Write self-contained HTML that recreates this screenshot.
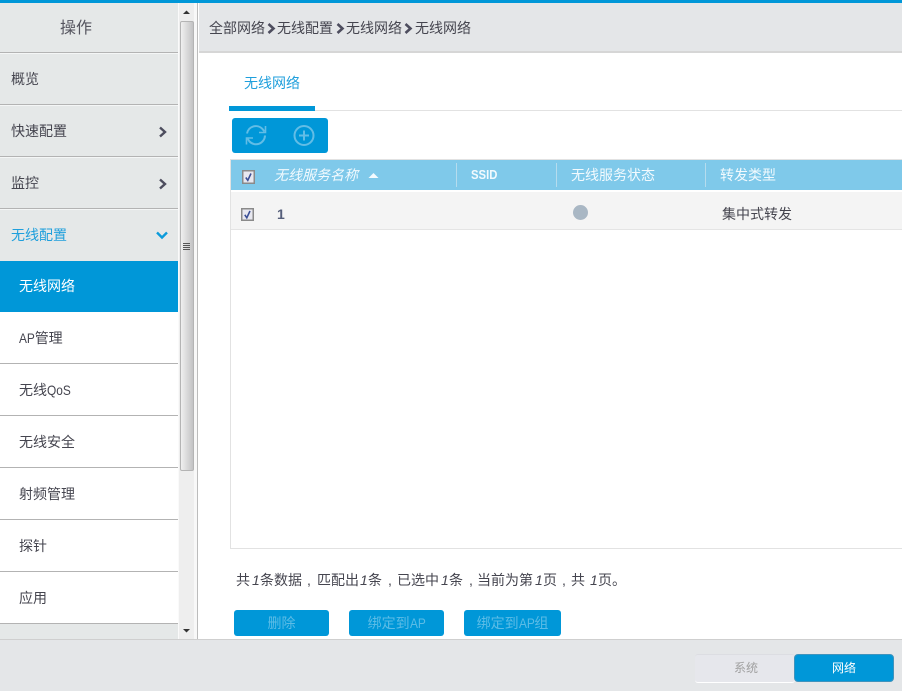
<!DOCTYPE html>
<html lang="zh"><head><meta charset="utf-8"><title>无线网络</title>
<style>
*{box-sizing:border-box;margin:0;padding:0}
html,body{width:902px;height:691px;overflow:hidden;background:#fff}
body{position:relative;font:14px/20px "Liberation Sans","Noto Sans CJK SC",sans-serif;color:#45454f}
.a{position:absolute}
.t{position:absolute;white-space:nowrap}
.nav{position:absolute;left:0;width:178px;height:52px;border-bottom:1px solid #b3b3b3;padding-left:11px;line-height:53px}
.g{background:#e5e8e8;box-shadow:inset 0 1px 0 #f4f6f6}
.s{padding-left:19px;background:#fff}
.btn{position:absolute;top:610px;height:26px;background:#0097d8;border-radius:3px;color:#5cbce6;text-align:center;line-height:26px}
.sep{position:absolute;top:163px;width:1px;height:24px;background:#b5dcee}
.h{position:absolute;top:165px;color:#f2fafe;line-height:20px;white-space:nowrap}
i{font-style:italic}
b{font-weight:normal;display:inline-block;transform:scaleX(.85);transform-origin:0 50%}
b.ap{margin-right:-3px}
b.qos{margin-right:-4px}
.n{position:absolute;top:570px;font-style:italic;white-space:nowrap}
</style></head><body>
<div class="a" style="left:0;top:0;width:902px;height:3px;background:#0097d8;z-index:5"></div>

<!-- sidebar -->
<div class="nav" style="top:1px;height:52px;background:#e5e8e8;text-align:center;padding:0 26px 0 0;font-size:16px;line-height:56px;color:#55555f">操作</div>
<div class="nav g" style="top:53px">概览</div>
<div class="nav g" style="top:105px">快速配置</div>
<div class="nav g" style="top:157px">监控</div>
<div class="nav g" style="top:209px;height:52px;border:0;color:#1f9fdc">无线配置</div>
<div class="nav s" style="top:261px;height:51px;background:#0097d8;color:#fff;border:0;line-height:50px">无线网络</div>
<div class="nav s" style="top:312px"><b class="ap">AP</b>管理</div>
<div class="nav s" style="top:364px">无线<b class="qos">QoS</b></div>
<div class="nav s" style="top:416px">无线安全</div>
<div class="nav s" style="top:468px">射频管理</div>
<div class="nav s" style="top:520px">探针</div>
<div class="nav s" style="top:572px">应用</div>
<div class="a" style="left:0;top:624px;width:178px;height:16px;background:#e5e8e8"></div>
<svg class="a" style="left:157px;top:125px" width="12" height="14"><path d="M3 2.500L8 7L3 11.500" fill="none" stroke="#4d4d5e" stroke-width="2.400"/></svg>
<svg class="a" style="left:157px;top:177px" width="12" height="14"><path d="M3 2.500L8 7L3 11.500" fill="none" stroke="#4d4d5e" stroke-width="2.400"/></svg>
<svg class="a" style="left:155px;top:229px" width="14" height="12"><path d="M2 3.500L7 8.500L12 3.500" fill="none" stroke="#0c9bdb" stroke-width="2.400"/></svg>

<!-- scrollbar -->
<div class="a" style="left:178px;top:3px;width:19px;height:636px;background:#eeeeee;border-left:1px solid #fafafa;border-right:3px solid #f8f8f8"></div>
<div class="a" style="left:197px;top:3px;width:1px;height:636px;background:#bcbcbc"></div>
<div class="a" style="left:180px;top:21px;width:14px;height:450px;border:1px solid #b4b4b4;border-radius:2px;background:linear-gradient(90deg,#f0f0f0,#dedede 40%,#c2c2c4)"></div>
<div class="a" style="left:183px;top:243px;width:7px;height:1px;background:#555;box-shadow:0 2px 0 #555,0 4px 0 #555,0 6px 0 #555"></div>
<svg class="a" style="left:182px;top:9px" width="9" height="6"><path d="M1 5L4.500 1.500L8 5Z" fill="#333"/></svg>
<svg class="a" style="left:182px;top:628px" width="9" height="6"><path d="M1 1H8L4.500 4.500Z" fill="#333"/></svg>

<!-- breadcrumb -->
<div class="a" style="left:199px;top:3px;width:703px;height:50px;background:#e4e6e8;border-bottom:2px solid #d6d6d6"></div>
<div class="t" style="left:209px;top:18px">全部网络</div>
<div class="t" style="left:277px;top:18px">无线配置</div>
<div class="t" style="left:346px;top:18px">无线网络</div>
<div class="t" style="left:415px;top:18px">无线网络</div>
<svg class="a" style="left:267px;top:23px" width="9" height="11"><path d="M1.500 1L6.500 5.500L1.500 10" fill="none" stroke="#4d4d5e" stroke-width="2.600"/></svg>
<svg class="a" style="left:336px;top:23px" width="9" height="11"><path d="M1.500 1L6.500 5.500L1.500 10" fill="none" stroke="#4d4d5e" stroke-width="2.600"/></svg>
<svg class="a" style="left:404px;top:23px" width="9" height="11"><path d="M1.500 1L6.500 5.500L1.500 10" fill="none" stroke="#4d4d5e" stroke-width="2.600"/></svg>

<!-- tab -->
<div class="t" style="left:244px;top:73px;color:#1f9fdc">无线网络</div>
<div class="a" style="left:229px;top:110px;width:673px;height:1px;background:#e2e2e2"></div>
<div class="a" style="left:229px;top:106px;width:86px;height:5px;background:#0097d8"></div>

<!-- toolbar -->
<div class="a" style="left:232px;top:118px;width:96px;height:35px;background:#0097d8;border-radius:3px"></div>
<svg class="a" style="left:244px;top:123px" width="24" height="24" fill="none" stroke="#62bde6" stroke-width="2">
<path d="M3 10.500A9 9 0 0 1 18.500 6L20.500 8.500"/><path d="M21 12.500A9 9 0 0 1 5.500 18.500L3.500 15.500"/>
<path d="M21.500 3V9.500H15" stroke-width="1.600"/><path d="M2.500 21.500V15H9" stroke-width="1.600"/></svg>
<svg class="a" style="left:292px;top:123px" width="24" height="24" fill="none" stroke="#62bde6" stroke-width="2">
<circle cx="12" cy="12.500" r="9.500"/><path d="M12 7.500V17.500M7 12.500H17"/></svg>

<!-- table -->
<div class="a" style="left:230px;top:159px;width:672px;height:390px;border:1px solid #e2e2e2;border-right:0;background:#fff"></div>
<div class="a" style="left:231px;top:160px;width:671px;height:30px;background:#7fc9ea"></div>
<div class="a" style="left:231px;top:192px;width:671px;height:37px;background:#f4f4f4"></div>
<div class="a" style="left:231px;top:229px;width:671px;height:1px;background:#e4e4e4"></div>
<div class="sep" style="left:456px"></div>
<div class="sep" style="left:556px"></div>
<div class="sep" style="left:705px"></div>

<svg class="a" style="left:242px;top:170px" width="13" height="14"><rect x=".75" y=".75" width="11.500" height="12.500" fill="#e8e8f0" stroke="#8a8a8a" stroke-width="1.500"/><path d="M3.800 7.500L5.800 10.300L9 3.500" fill="none" stroke="#3b4f96" stroke-width="1.600"/></svg>
<svg class="a" style="left:241px;top:208px" width="13" height="13"><rect x=".75" y=".75" width="11.500" height="11.500" fill="#e8e8f0" stroke="#8a8a8a" stroke-width="1.500"/><path d="M3.800 6.800L5.800 9.800L9 3" fill="none" stroke="#3b4f96" stroke-width="1.600"/></svg>

<div class="h" style="left:274px"><i>无线服务名称</i></div>
<svg class="a" style="left:368px;top:172px" width="11" height="7"><path d="M0.500 6L5.500 1L10.500 6Z" fill="#f4fbff"/></svg>
<div class="h" style="left:471px;font-weight:bold;font-size:13px;transform:scaleX(.87);transform-origin:0 50%">SSID</div>
<div class="h" style="left:571px">无线服务状态</div>
<div class="h" style="left:720px">转发类型</div>

<div class="t" style="left:277px;top:204px;font-weight:bold;color:#555e7a;font-size:14px">1</div>
<div class="a" style="left:573px;top:205px;width:15px;height:15px;border-radius:50%;background:#a9b7c4"></div>
<div class="t" style="left:722px;top:204px">集中式转发</div>

<!-- summary -->
<div class="t" style="left:236px;top:570px">共</div>
<div class="n" style="left:252px">1</div>
<div class="t" style="left:260px;top:570px">条数据</div>
<div class="t" style="left:307px;top:570px">,</div>
<div class="t" style="left:317px;top:570px">匹配出</div>
<div class="n" style="left:360px">1</div>
<div class="t" style="left:368px;top:570px">条</div>
<div class="t" style="left:388px;top:570px">,</div>
<div class="t" style="left:397px;top:570px">已选中</div>
<div class="n" style="left:441px">1</div>
<div class="t" style="left:449px;top:570px">条</div>
<div class="t" style="left:469px;top:570px">,</div>
<div class="t" style="left:477px;top:570px">当前为第</div>
<div class="n" style="left:535px">1</div>
<div class="t" style="left:543px;top:570px">页</div>
<div class="t" style="left:562px;top:570px">,</div>
<div class="t" style="left:571px;top:570px">共</div>
<div class="n" style="left:590px">1</div>
<div class="t" style="left:598px;top:570px">页。</div>

<div class="btn" style="left:234px;width:95px">删除</div>
<div class="btn" style="left:349px;width:95px">绑定到<b class="ap">AP</b></div>
<div class="btn" style="left:464px;width:97px">绑定到<b class="ap">AP</b>组</div>

<!-- footer -->
<div class="a" style="left:0;top:639px;width:902px;height:52px;background:#e4e6e8;border-top:1px solid #cfcfcf"></div>
<div class="a" style="left:695px;top:654px;width:100px;height:29px;background:#e6e7ec;border-radius:3px;border-bottom:1px solid #fff;border-top:1px solid #dcdde2;color:#a0a0a0;text-align:center;font-size:12px;line-height:27px;padding-left:2px">系统</div>
<div class="a" style="left:794px;top:654px;width:100px;height:28px;background:#0097d8;border-radius:4px;border:1px solid #3f93bd;color:#fff;text-align:center;font-size:12px;line-height:26px">网络</div>
</body></html>
